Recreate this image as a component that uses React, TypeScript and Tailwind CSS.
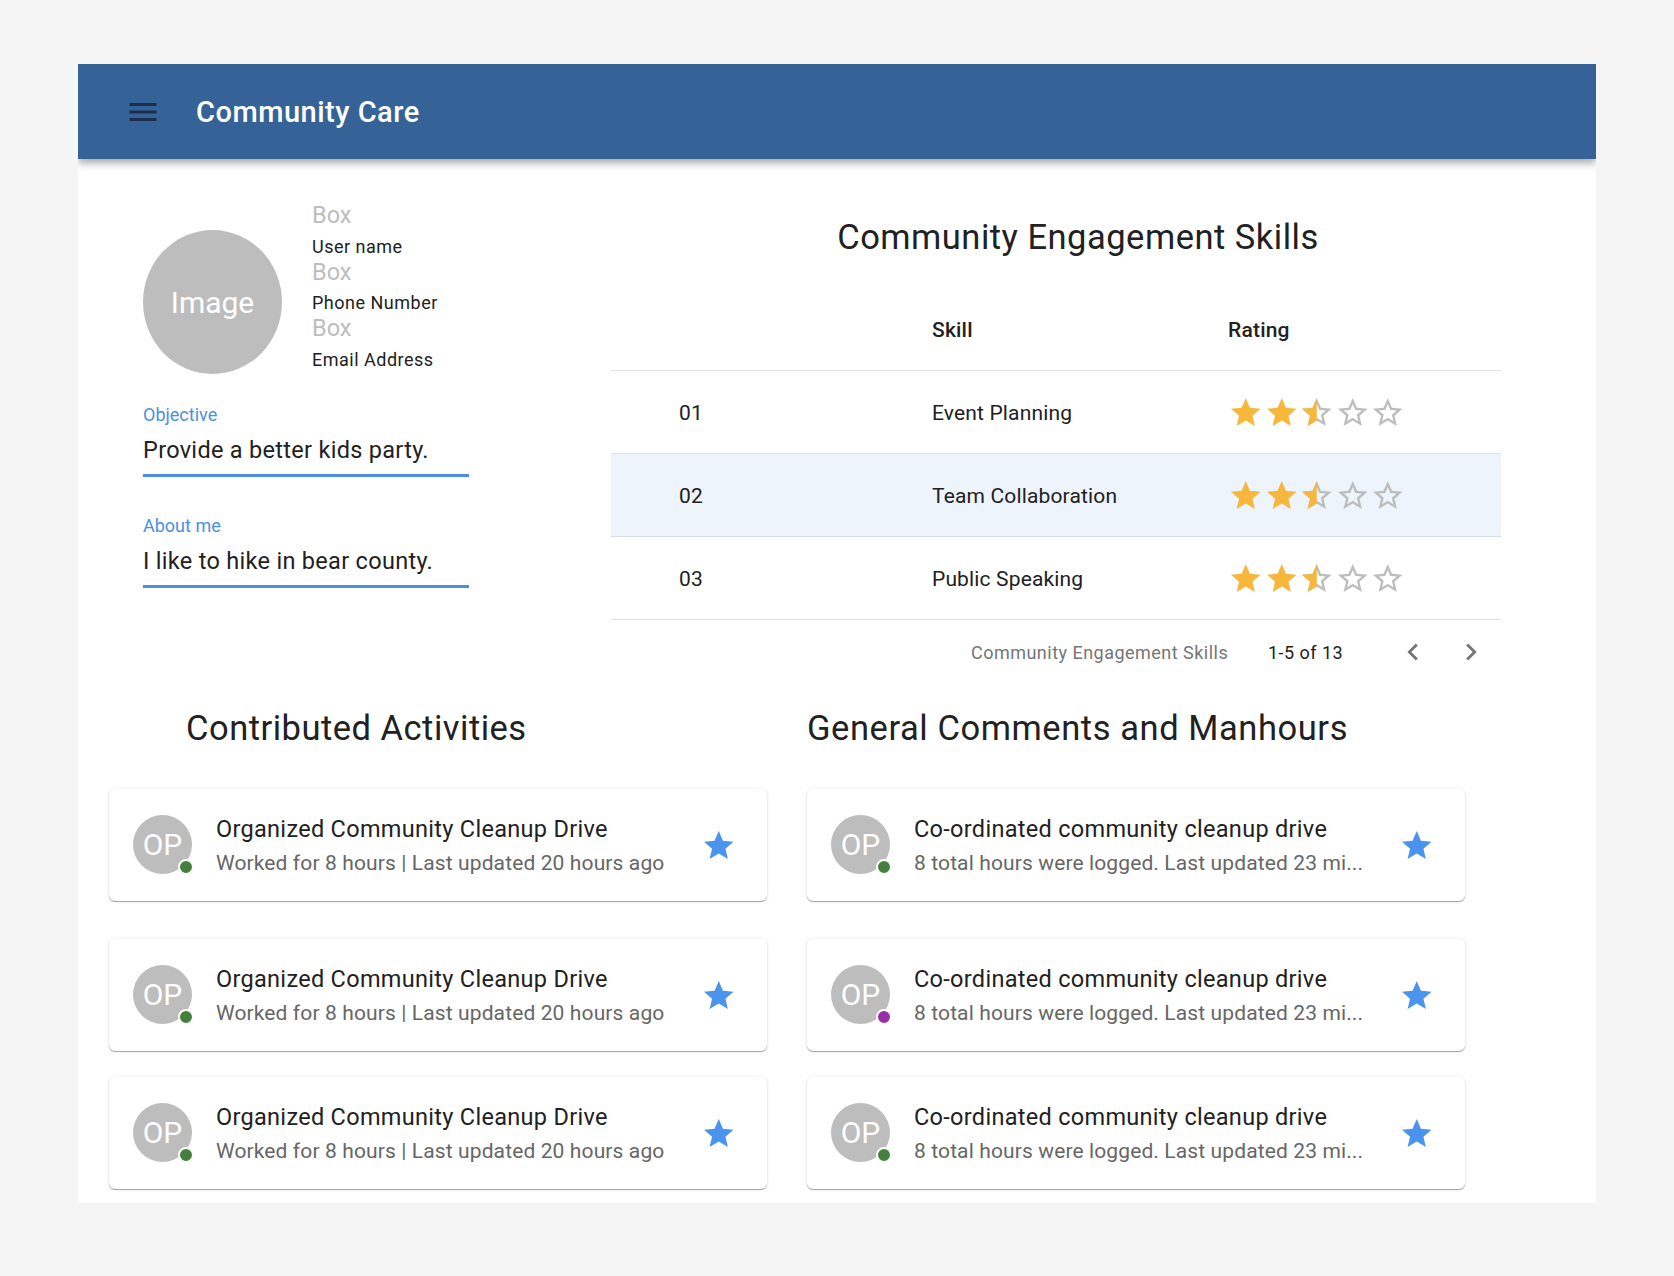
const starPath = "M12 17.27L18.18 21l-1.64-7.03L22 9.24l-7.19-.61L12 2 9.19 8.63 2 9.24l5.46 4.73L5.82 21z";
const starBorderPath =
  "M22 9.24l-7.19-.62L12 2 9.19 8.63 2 9.24l5.46 4.73L5.82 21 12 17.27 18.18 21l-1.63-7.03L22 9.24zM12 15.4l-3.76 2.27 1-4.28-3.32-2.88 4.38-.38L12 6.1l1.71 4.04 4.38.38-3.32 2.88 1 4.28L12 15.4z";
const halfStarPath = "M12 2 9.19 8.63 2 9.24l5.46 4.73L5.82 21 12 17.27z";

function Rating() {
  return (
    <div className="flex">
      {[0, 1].map((i) => (
        <svg key={i} viewBox="0 0 24 24" className="w-[35.5px] h-[35.5px] fill-[#f6b73c]">
          <path d={starPath} />
        </svg>
      ))}
      <svg viewBox="0 0 24 24" className="w-[35.5px] h-[35.5px]">
        <path d={starBorderPath} fill="#bdbdbd" />
        <path d={halfStarPath} fill="#f6b73c" />
      </svg>
      {[3, 4].map((i) => (
        <svg key={i} viewBox="0 0 24 24" className="w-[35.5px] h-[35.5px] fill-[#bdbdbd]">
          <path d={starBorderPath} />
        </svg>
      ))}
    </div>
  );
}

const skills = [
  { no: "01", name: "Event Planning", tint: false },
  { no: "02", name: "Team Collaboration", tint: true },
  { no: "03", name: "Public Speaking", tint: false },
];

function ActivityCard({ title, sub, dot, className }: { title: string; sub: string; dot: string; className: string }) {
  return (
    <div className={`flex items-center h-[112px] w-[658px] bg-white rounded-[6px] pl-6 shadow-[0_1px_1px_rgba(0,0,0,0.35),0_0_4px_rgba(0,0,0,0.08)] ${className}`}>
      <div className="relative shrink-0 w-[59px] h-[59px] -mt-[1px] pb-[1px] rounded-full bg-[#bdbdbd] flex items-center justify-center text-white text-[30px]">
        OP
        <span className={`absolute right-0 bottom-0 w-[12px] h-[12px] rounded-full box-content border-[2.5px] border-white -mr-[2px] -mb-[1px] ${dot}`} />
      </div>
      <div className="ml-6 w-[448px] min-w-0 pt-[2px]">
        <div className="text-[23.5px] leading-[32px] tracking-[0.3px] text-[#212121] whitespace-nowrap">{title}</div>
        <div className="mt-[2px] text-[21px] leading-[32px] tracking-[0.12px] text-[#666666] whitespace-nowrap">{sub}</div>
      </div>
      <svg viewBox="0 0 24 24" className="ml-[37px] mt-[2px] w-[35.5px] h-[35.5px] fill-[#4a94ed]">
        <path d={starPath} />
      </svg>
    </div>
  );
}

function InfoLine({ label }: { label: string }) {
  return (
    <div>
      <div className="text-[23.5px] leading-[29px] text-[#bdbdbd]">Box</div>
      <div className="pt-[5.5px] text-[18px] leading-[22px] tracking-[0.5px] text-[#212121]">{label}</div>
    </div>
  );
}

function Field({ label, value, className }: { label: string; value: string; className?: string }) {
  return (
    <div className={`w-[326px] ${className ?? ""}`}>
      <div className="text-[18px] leading-[24px] text-[#4a90e2]">{label}</div>
      <div className="mt-[6px] text-[23.5px] leading-[34px] tracking-[0.3px] pb-[7px] text-[#212121] border-b-[3px] border-[#4a90e2]">{value}</div>
    </div>
  );
}

export default function App() {
  const left = ["bg-[#43803b]", "bg-[#43803b]", "bg-[#43803b]"];
  const right = ["bg-[#43803b]", "bg-[#9530a8]", "bg-[#43803b]"];
  const spacing = ["mb-[38px]", "mb-[26px]", ""];

  return (
    <div className="min-h-[1276px] bg-[#f5f5f5] pt-[64px] pl-[78px] font-['Roboto',sans-serif]">
      <div className="w-[1518px] h-[1139px] bg-white overflow-hidden">
        <header className="relative h-[95px] bg-[#356397] flex items-center pl-[47px] shadow-[0_4px_8px_rgba(0,0,0,0.35)]">
          <svg viewBox="0 0 24 24" className="w-[36px] h-[36px] fill-[#1b2f4c]">
            <path d="M3 18h18v-2H3v2zm0-5h18v-2H3v2zm0-7v2h18V6H3z" />
          </svg>
          <h1 className="ml-[35px] mt-[2px] text-[29px] tracking-[0.5px] font-medium text-white">Community Care</h1>
        </header>

        <div className="flex">
          <section className="w-[533px] pl-[65px] pt-[42px] shrink-0">
            <div className="flex items-start">
              <div className="w-[139px] h-[144px] rounded-[50%] bg-[#bdbdbd] flex items-center justify-center text-white text-[30px] mt-[29px]">
                Image
              </div>
              <div className="ml-[30px]">
                <InfoLine label="User name" />
                <InfoLine label="Phone Number" />
                <InfoLine label="Email Address" />
              </div>
            </div>
            <Field className="mt-[29px]" label="Objective" value="Provide a better kids party." />
            <Field className="mt-[37px]" label="About me" value="I like to hike in bear county." />
          </section>

          <section className="w-[890px] pt-[55px]">
            <h2 className="text-center text-[34.5px] leading-[46px] tracking-[0.5px] text-[#212121] ml-[44px]">Community Engagement Skills</h2>
            <div className="mt-[35px] flex items-center h-[76px] pb-[4px] border-b border-[#e0e0e0] text-[21px] tracking-[0.2px] font-medium text-[#212121]">
              <div className="w-[320px]" />
              <div className="w-[297px] pl-[1px]">Skill</div>
              <div>Rating</div>
            </div>
            {skills.map((s) => (
              <div
                key={s.no}
                className={`flex items-center h-[83px] pt-[2px] border-b text-[21px] tracking-[0.15px] text-[#212121] ${s.tint ? "bg-[#edf4fb] border-[#d5dce5]" : "border-[#e0e0e0]"}`}
              >
                <div className="w-[320px] pl-[68px] mt-[2px]">{s.no}</div>
                <div className="w-[297px] pl-[1px] mt-[2px]">{s.name}</div>
                <Rating />
              </div>
            ))}
            <div className="flex items-center h-[64px] text-[18px] tracking-[0.48px]">
              <div className="ml-[360px] w-[297px] text-[#757575]">Community Engagement Skills</div>
              <div className="w-[126px] text-[#212121]">1-5 of 13</div>
              <svg viewBox="0 0 24 24" className="ml-[1.5px] w-[34px] h-[34px] fill-[#757575]">
                <path d="M15.41 7.41L14 6l-6 6 6 6 1.41-1.41L10.83 12z" />
              </svg>
              <svg viewBox="0 0 24 24" className="ml-[24px] w-[34px] h-[34px] fill-[#757575]">
                <path d="M10 6L8.59 7.41 13.17 12l-4.58 4.59L10 18l6-6z" />
              </svg>
            </div>
          </section>
        </div>

        <div className="flex pl-[31px] pt-[21px]">
          <section className="w-[698px] shrink-0">
            <h2 className="pl-[77px] text-[34.5px] leading-[46px] tracking-[0.5px] text-[#212121] mb-[38px]">Contributed Activities</h2>
            {left.map((dot, i) => (
              <ActivityCard
                key={i}
                className={spacing[i]}
                dot={dot}
                title="Organized Community Cleanup Drive"
                sub="Worked for 8 hours | Last updated 20 hours ago"
              />
            ))}
          </section>
          <section>
            <h2 className="text-[34.5px] leading-[46px] tracking-[0.57px] text-[#212121] mb-[38px] whitespace-nowrap">General Comments and Manhours</h2>
            {right.map((dot, i) => (
              <ActivityCard
                key={i}
                className={spacing[i]}
                dot={dot}
                title="Co-ordinated community cleanup drive"
                sub="8 total hours were logged. Last updated 23 mi..."
              />
            ))}
          </section>
        </div>
      </div>
    </div>
  );
}
